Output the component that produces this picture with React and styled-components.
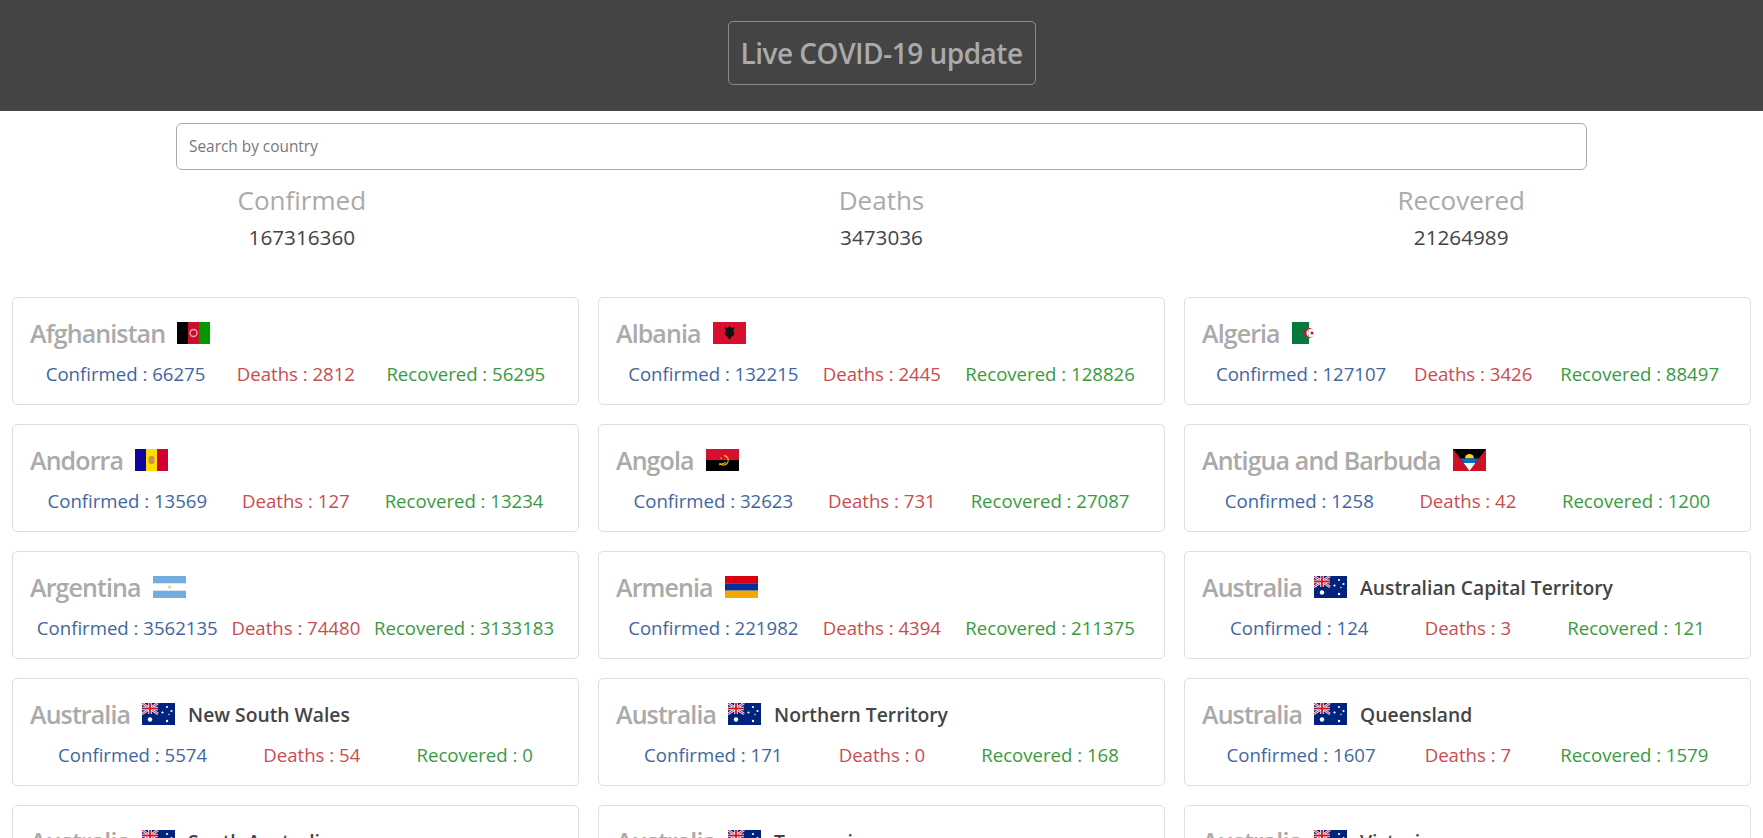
import React from "react";
import styled, { createGlobalStyle } from "styled-components";

const GlobalStyle = createGlobalStyle`
  * {
    box-sizing: border-box;
  }
  html, body {
    margin: 0;
    padding: 0;
    background: #fff;
    font-family: "Open Sans", "Liberation Sans", sans-serif;
  }
`;

const Header = styled.header`
  height: 111px;
  padding-top: 21px;
  background: #444;
  display: flex;
  align-items: flex-start;
  justify-content: center;
`;
const Title = styled.h1`
  margin: 0;
  width: 308px;
  height: 64px;
  display: flex;
  align-items: center;
  justify-content: center;
  border: 1px solid #8a8a8a;
  border-radius: 5px;
  color: #aaa;
  font-size: 28px;
  font-weight: 600;
  letter-spacing: -0.5px;
`;
const Search = styled.div`
  display: flex;
  justify-content: center;
  padding-top: 12px;
`;
const SearchInput = styled.input`
  width: 1411px;
  height: 47px;
  padding: 0 12px 1px;
  border: 1px solid #aaa;
  border-radius: 6px;
  outline: none;
  font-family: inherit;
  font-size: 15.4px;
  color: #444;
  &::placeholder {
    color: #777;
  }
`;
const Totals = styled.section`
  display: grid;
  grid-template-columns: repeat(3, 1fr);
  padding: 12px 12px 0;
  text-align: center;
`;
const TotalLabel = styled.div`
  font-size: 26px;
  line-height: 36px;
  color: #aaa;
`;
const TotalValue = styled.div`
  margin-top: 3px;
  font-size: 20.7px;
  line-height: 32px;
  color: #444;
`;
const Grid = styled.main`
  display: grid;
  grid-template-columns: repeat(3, 1fr);
  column-gap: 19px;
  row-gap: 19px;
  padding: 44px 12px 12px;
`;
const Card = styled.article`
  height: 108px;
  padding: 17px;
  border: 1px solid #dfdfdf;
  border-radius: 5px;
`;
const CardHead = styled.div`
  display: flex;
  align-items: center;
  height: 36px;
`;
const Country = styled.span`
  font-size: 25px;
  font-weight: 600;
  letter-spacing: -0.9px;
  color: #aaa;
`;
const Region = styled.span`
  margin-left: 13px;
  font-size: 19.3px;
  font-weight: 600;
  color: #444;
`;
const FlagBox = styled.svg`
  flex: none;
  width: 33px;
  height: 22px;
  margin-left: 12px;
`;
const CardStats = styled.div`
  display: flex;
  justify-content: space-around;
  margin-top: 10px;
  font-size: 18.6px;
  line-height: 26px;
`;
const Stat = styled.span`
  color: ${(props) => props.color};
`;

const flags = {
  af: (
    <>
      <rect width="11" height="22" fill="#000" />
      <rect x="11" width="11" height="22" fill="#c8102e" />
      <rect x="22" width="11" height="22" fill="#090" />
      <circle cx="16.5" cy="11" r="3.5" fill="none" stroke="#e8a0a0" strokeWidth="1.4" />
    </>
  ),
  al: (
    <>
      <rect width="33" height="22" fill="#d8102f" />
      <path d="M16.5 4l2 2 3-1-1 4 1 3-3 3-2 3-2-3-3-3 1-3-1-4 3 1z" fill="#111" />
    </>
  ),
  dz: (
    <>
      <rect width="17" height="22" fill="#067a3e" />
      <circle cx="17" cy="11" r="5" fill="#d21034" />
      <circle cx="18.5" cy="11" r="4" fill="#fff" />
      <path d="M17 11a4 4 0 0 1 0-4v8a4 4 0 0 1 0-4z" fill="#067a3e" />
      <circle cx="20" cy="11" r="1.5" fill="#d21034" />
    </>
  ),
  ad: (
    <>
      <rect width="12" height="22" fill="#10069f" />
      <rect x="11" width="11" height="22" fill="#fedd00" />
      <rect x="22" width="11" height="22" fill="#d50032" />
      <rect x="13.5" y="7" width="6" height="8" rx="2.5" fill="#c9963f" />
    </>
  ),
  ao: (
    <>
      <rect width="33" height="11" fill="#d8102f" />
      <rect y="11" width="33" height="11" fill="#000" />
      <path d="M18 6.5a4.8 4.8 0 1 1-4.5 7.5" fill="none" stroke="#f0b800" strokeWidth="1.3" />
      <path d="M13 16l7-2.5M14.5 8.5l1 1.6" stroke="#f0b800" strokeWidth="1.1" />
    </>
  ),
  ag: (
    <>
      <rect width="33" height="22" fill="#ce1126" />
      <path d="M0 0h33L16.5 22z" fill="#000" />
      <path d="M12 9.5a4.5 4.5 0 0 1 9 0z" fill="#fcd116" />
      <path d="M7.2 9.5h18.6l-3.4 4.6H10.6z" fill="#0072c6" />
      <path d="M10.6 14.1h11.8L16.5 22z" fill="#fff" />
    </>
  ),
  ar: (
    <>
      <rect width="33" height="22" fill="#74acdf" />
      <rect y="7.3" width="33" height="7.4" fill="#fff" />
      <circle cx="16.5" cy="11" r="1.6" fill="#f6d36a" />
    </>
  ),
  am: (
    <>
      <rect width="33" height="7.4" fill="#d90012" />
      <rect y="7.3" width="33" height="7.4" fill="#0033a0" />
      <rect y="14.6" width="33" height="7.4" fill="#f2a800" />
    </>
  ),
  au: (
    <>
      <rect width="33" height="22" fill="#00247d" />
      <path d="M0 0l16 11M16 0L0 11" stroke="#fff" strokeWidth="2.4" />
      <path d="M0 0l16 11M16 0L0 11" stroke="#cf142b" strokeWidth="1" />
      <path d="M8 0v11M0 5.5h16" stroke="#fff" strokeWidth="3.4" />
      <path d="M8 0v11M0 5.5h16" stroke="#cf142b" strokeWidth="1.8" />
      <circle cx="8" cy="16.5" r="2.2" fill="#fff" />
      <circle cx="25" cy="4" r="1.1" fill="#fff" />
      <circle cx="20.5" cy="9.5" r="1.1" fill="#fff" />
      <circle cx="29.5" cy="8" r="1.1" fill="#fff" />
      <circle cx="25" cy="18" r="1.2" fill="#fff" />
      <circle cx="27" cy="11.5" r="0.7" fill="#fff" />
    </>
  ),
};

const places = [
  { name: "Afghanistan", flag: "af", confirmed: 66275, deaths: 2812, recovered: 56295 },
  { name: "Albania", flag: "al", confirmed: 132215, deaths: 2445, recovered: 128826 },
  { name: "Algeria", flag: "dz", confirmed: 127107, deaths: 3426, recovered: 88497 },
  { name: "Andorra", flag: "ad", confirmed: 13569, deaths: 127, recovered: 13234 },
  { name: "Angola", flag: "ao", confirmed: 32623, deaths: 731, recovered: 27087 },
  { name: "Antigua and Barbuda", flag: "ag", confirmed: 1258, deaths: 42, recovered: 1200 },
  { name: "Argentina", flag: "ar", confirmed: 3562135, deaths: 74480, recovered: 3133183 },
  { name: "Armenia", flag: "am", confirmed: 221982, deaths: 4394, recovered: 211375 },
  { name: "Australia", region: "Australian Capital Territory", flag: "au", confirmed: 124, deaths: 3, recovered: 121 },
  { name: "Australia", region: "New South Wales", flag: "au", confirmed: 5574, deaths: 54, recovered: 0 },
  { name: "Australia", region: "Northern Territory", flag: "au", confirmed: 171, deaths: 0, recovered: 168 },
  { name: "Australia", region: "Queensland", flag: "au", confirmed: 1607, deaths: 7, recovered: 1579 },
  { name: "Australia", region: "South Australia", flag: "au", confirmed: 750, deaths: 4, recovered: 740 },
  { name: "Australia", region: "Tasmania", flag: "au", confirmed: 234, deaths: 13, recovered: 221 },
  { name: "Australia", region: "Victoria", flag: "au", confirmed: 20500, deaths: 820, recovered: 19600 },
];

function Flag({ code }) {
  return <FlagBox viewBox="0 0 33 22">{flags[code]}</FlagBox>;
}

function App() {
  return (
    <>
      <GlobalStyle />
      <Header>
        <Title>Live COVID-19 update</Title>
      </Header>
      <Search>
        <SearchInput placeholder="Search by country" />
      </Search>
      <Totals>
        <div>
          <TotalLabel>Confirmed</TotalLabel>
          <TotalValue>167316360</TotalValue>
        </div>
        <div>
          <TotalLabel>Deaths</TotalLabel>
          <TotalValue>3473036</TotalValue>
        </div>
        <div>
          <TotalLabel>Recovered</TotalLabel>
          <TotalValue>21264989</TotalValue>
        </div>
      </Totals>
      <Grid>
        {places.map((place, index) => (
          <Card key={index}>
            <CardHead>
              <Country>{place.name}</Country>
              <Flag code={place.flag} />
              {place.region ? <Region>{place.region}</Region> : null}
            </CardHead>
            <CardStats>
              <Stat color="#3f66a0">Confirmed : {place.confirmed}</Stat>
              <Stat color="#c94c50">Deaths : {place.deaths}</Stat>
              <Stat color="#3a9a3f">Recovered : {place.recovered}</Stat>
            </CardStats>
          </Card>
        ))}
      </Grid>
    </>
  );
}

export default App;
